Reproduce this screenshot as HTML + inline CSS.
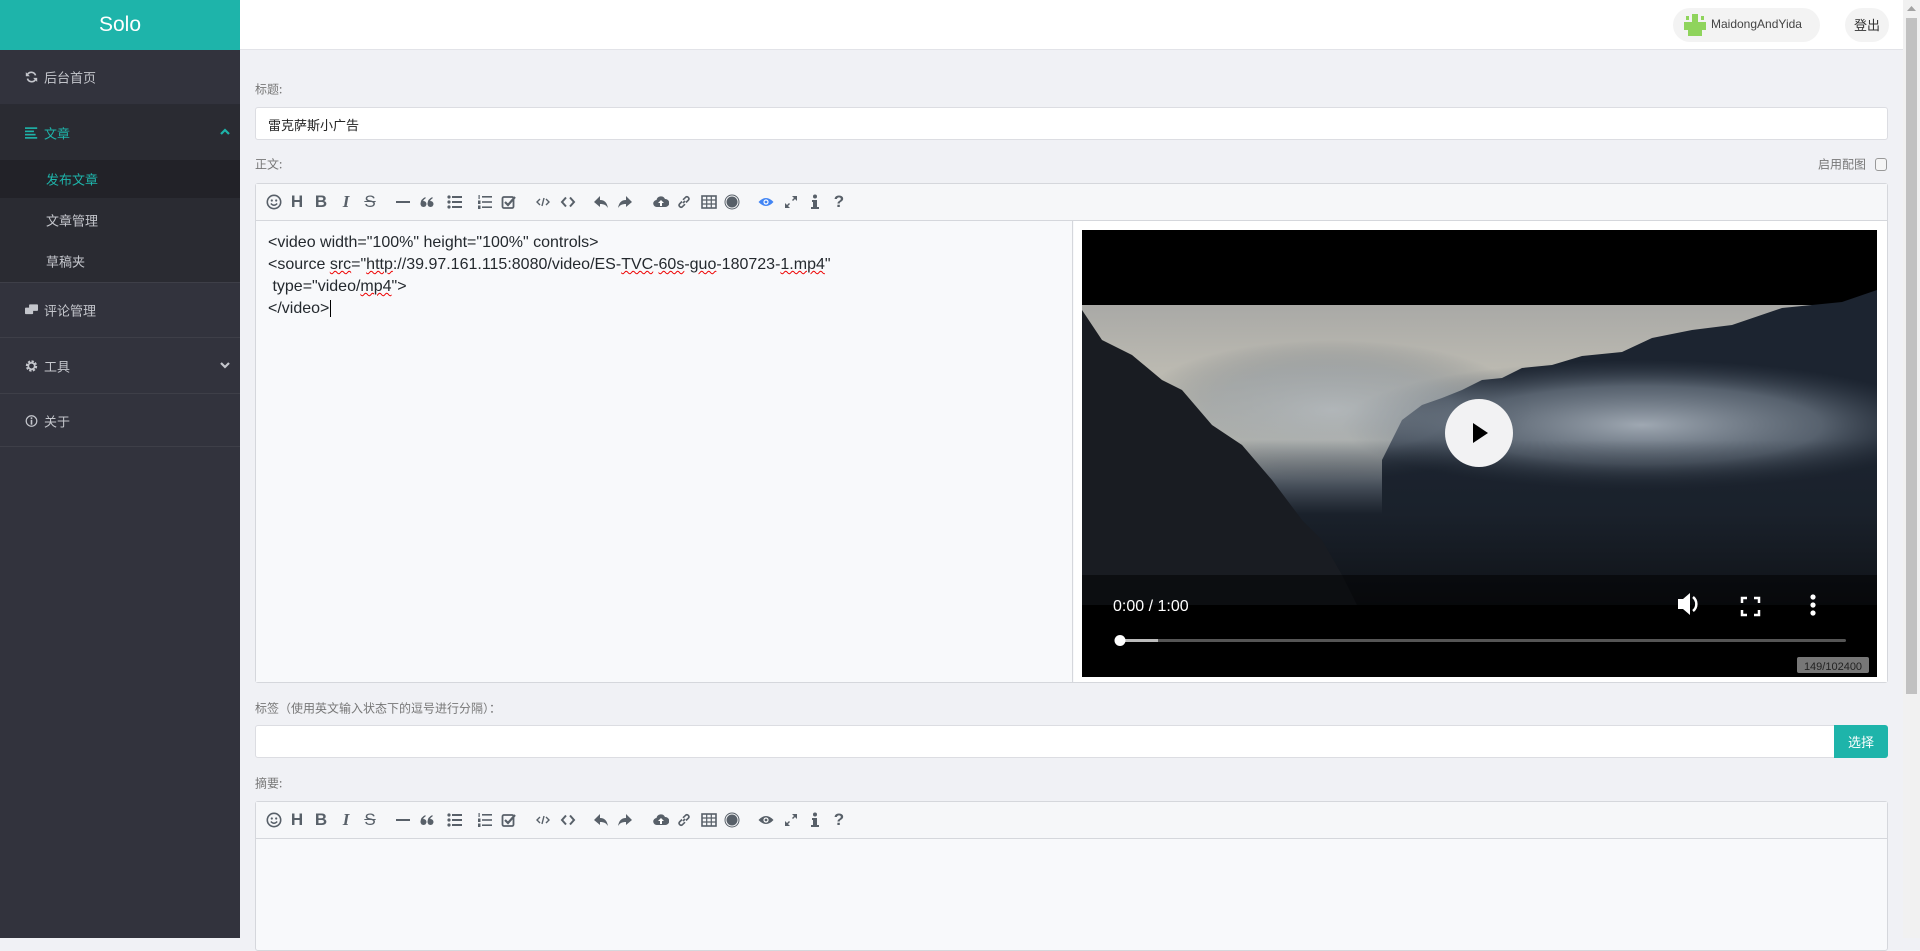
<!DOCTYPE html>
<html><head><meta charset="utf-8">
<style>
*{box-sizing:border-box;margin:0;padding:0}
body{width:1920px;height:938px;overflow:hidden;background:#f0f1f5;font-family:"Liberation Sans","Noto Sans CJK SC",sans-serif;position:relative}
.side{position:absolute;left:0;top:0;width:240px;height:938px;background:#32333d}
.logo{height:50px;background:#1eb4aa;color:#fff;font-size:21px;text-align:center;line-height:50px}
.nav{position:absolute;left:0;width:240px;color:#c4c6cc;font-size:13px;font-family:"Noto Sans CJK SC",sans-serif}
.nav .ic{position:absolute;left:25px;top:50%;transform:translateY(-50%);width:13px;height:13px}
.nav span.t{position:absolute;left:44px;top:50%;transform:translateY(-50%)}
.sub{position:absolute;left:46px;font-size:13px;color:#c4c6cc;font-family:"Noto Sans CJK SC",sans-serif;transform:translateY(-50%)}
.hdr{position:absolute;left:240px;top:0;width:1663px;height:50px;background:#fff;border-bottom:1px solid #e2e3e8}
.sb{position:absolute;right:0;top:0;width:17px;height:938px;background:#f1f1f1}
.sb div{position:absolute;left:3px;top:18px;width:11px;height:676px;background:#c1c1c1}
.lbl{position:absolute;left:255px;font-size:12px;color:#777;font-family:"Noto Sans CJK SC",sans-serif;transform:translateY(-50%)}
.inp{position:absolute;left:255px;background:#fff;border:1px solid #dcdde2;border-radius:3px}
.ed{position:absolute;left:255px;width:1633px;border:1px solid #d5d7dc;border-radius:3px;background:#f8f9fb}
.tb{position:absolute;left:0;top:0;right:0;height:37px;background:#f6f7f9;border-bottom:1px solid #d5d7dc}
.i{position:absolute;top:10px;width:16px;height:16px;margin-left:-8px;color:#586069;fill:#586069;font-weight:bold;font-size:17px;line-height:16px;text-align:center;font-family:"Liberation Sans",sans-serif}
.code{position:absolute;left:12px;top:11px;font-size:16px;line-height:22px;color:#24292e;font-family:"Liberation Sans",sans-serif}
.u{text-decoration:underline wavy #e00;text-decoration-thickness:1px}
</style></head><body>
<div class="side">
 <div class="logo">Solo</div>
 <div class="nav" style="top:50px;height:55px;border-bottom:1px solid #2a2b33">
  <svg class="ic" viewBox="0 0 16 16"><path d="M13 6A5.5 5.5 0 0 0 3 5M3 10a5.5 5.5 0 0 0 10 1" stroke="#c4c6cc" stroke-width="2" fill="none"/><path d="M1 2v5h5zM15 14V9h-5z" fill="#c4c6cc"/></svg><span class="t">后台首页</span></div>
 <div style="position:absolute;top:105px;left:0;width:240px;height:177px;background:#2a2b32"></div>
 <div class="nav" style="top:105px;height:55px;color:#1eb4aa">
  <svg class="ic" viewBox="0 0 16 16" fill="#1eb4aa"><rect x="0" y="1" width="15" height="2"/><rect x="0" y="5" width="11" height="2"/><rect x="0" y="9" width="13" height="2"/><rect x="0" y="13" width="15" height="2"/></svg><span class="t">文章</span>
  <svg style="position:absolute;right:10px;top:23px" width="10" height="7" viewBox="0 0 10 7"><path d="M1 6l4-4 4 4" stroke="#1eb4aa" stroke-width="2.2" fill="none"/></svg></div>
 <div style="position:absolute;top:160px;left:0;width:240px;height:38px;background:#222228"></div>
 <div class="sub" style="top:179px;color:#1eb4aa">发布文章</div>
 <div class="sub" style="top:220px">文章管理</div>
 <div class="sub" style="top:261px">草稿夹</div>
 <div style="position:absolute;top:282px;left:0;width:240px;height:1px;background:#3e3f48"></div>
 <div class="nav" style="top:283px;height:55px;border-bottom:1px solid #3e3f48">
  <svg class="ic" viewBox="0 0 16 16" fill="#c4c6cc"><rect x="5" y="1" width="11" height="8" rx="1"/><rect x="0" y="5" width="10" height="8" rx="1"/></svg><span class="t">评论管理</span></div>
 <div class="nav" style="top:339px;height:55px;border-bottom:1px solid #3e3f48">
  <svg class="ic" viewBox="0 0 16 16"><circle cx="8" cy="8" r="5" stroke="#c4c6cc" stroke-width="4" stroke-dasharray="2.5 1.4" fill="none"/><circle cx="8" cy="8" r="4" stroke="#c4c6cc" stroke-width="2" fill="none"/></svg><span class="t">工具</span>
  <svg style="position:absolute;right:10px;top:23px" width="10" height="7" viewBox="0 0 10 7"><path d="M1 1l4 4 4-4" stroke="#c4c6cc" stroke-width="2.2" fill="none"/></svg></div>
 <div class="nav" style="top:395px;height:52px;border-bottom:1px solid #3e3f48">
  <svg class="ic" viewBox="0 0 16 16"><circle cx="8" cy="8" r="6.5" stroke="#c4c6cc" stroke-width="1.5" fill="none"/><rect x="7" y="6.5" width="2" height="6" fill="#c4c6cc"/><rect x="7" y="3.5" width="2" height="2" fill="#c4c6cc"/></svg><span class="t">关于</span></div>
</div>
<div class="hdr">
 <div style="position:absolute;left:1433px;top:8px;width:147px;height:34px;border-radius:17px;background:#f3f3f3">
  <svg style="position:absolute;left:11px;top:6px" width="22" height="22" viewBox="0 0 22 22" fill="#8fd45c"><rect x="8" y="0" width="6" height="8"/><rect x="0" y="8" width="22" height="8"/><rect x="4" y="16" width="14" height="6"/><rect x="2" y="2" width="3" height="4"/><rect x="17" y="2" width="3" height="4"/></svg>
  <span style="position:absolute;left:38px;top:9px;font-size:12px;color:#444">MaidongAndYida</span></div>
 <div style="position:absolute;left:1605px;top:8px;width:44px;height:34px;border-radius:17px;background:#f3f3f3;font-size:13px;color:#333;text-align:center;line-height:34px;font-family:'Noto Sans CJK SC',sans-serif">登出</div>
</div>
<div class="sb"><div></div><svg style="position:absolute;left:4px;top:5px" width="9" height="6"><path d="M0 6L4.5 1 9 6z" fill="#a3a3a3"/></svg></div>

<div class="lbl" style="top:89px">标题:</div>
<div class="inp" style="top:107px;width:1633px;height:33px"><span style="position:absolute;left:12px;top:7px;font-size:13px;color:#222;font-family:'Noto Sans CJK SC',sans-serif">雷克萨斯小广告</span></div>
<div class="lbl" style="top:164px">正文:</div>
<div class="lbl" style="top:164px;left:1818px">启用配图</div>
<div style="position:absolute;left:1875px;top:158px;width:12px;height:13px;border:1px solid #999;border-radius:3px;background:#f5f5f5"></div>

<div class="ed" style="top:183px;height:500px">
 <div class="tb" id="tb1"></div>
 <div style="position:absolute;left:0;top:37px;width:817px;bottom:0;background:#f8f9fb;border-right:1px solid #d5d7dc">
  <div class="code">&lt;video width="100%" height="100%" controls&gt;<br>&lt;source <span class="u">src</span>="<span class="u">http</span>://39.97.161.115:8080/video/ES-<span class="u">TVC</span>-<span class="u">60s</span>-<span class="u">guo</span>-180723-<span class="u">1.mp4</span>"<br>&nbsp;type="video/<span class="u">mp4</span>"&gt;<br>&lt;/video&gt;<span style="border-left:1px solid #000;margin-left:1px"></span></div>
 </div>
 <div style="position:absolute;left:818px;top:37px;right:0;bottom:0;background:#fff"></div>
</div>

<svg style="position:absolute;left:1082px;top:230px" width="795" height="447" viewBox="0 0 795 447">
 <defs>
  <linearGradient id="sky" x1="0" y1="0" x2="0" y2="1"><stop offset="0" stop-color="#a9a9a6"/><stop offset="0.45" stop-color="#cfcbbd"/><stop offset="0.6" stop-color="#8f9aa6"/><stop offset="1" stop-color="#3a4452"/></linearGradient>
  <radialGradient id="fog" cx="0.5" cy="0.5" r="0.5"><stop offset="0" stop-color="#a6afb9" stop-opacity="0.95"/><stop offset="0.6" stop-color="#7e8a97" stop-opacity="0.6"/><stop offset="1" stop-color="#4a5562" stop-opacity="0"/></radialGradient>
  <linearGradient id="dk" x1="0" y1="0" x2="0" y2="1"><stop offset="0" stop-color="#1a212b" stop-opacity="0"/><stop offset="0.45" stop-color="#1a212b"/><stop offset="1" stop-color="#0f1217"/></linearGradient>
 </defs>
 <rect width="795" height="447" fill="#000"/>
 <rect y="75" width="795" height="300" fill="url(#sky)"/>
 <path d="M300 230L320 190 340 175 360 168 380 160 400 150 420 148 440 138 470 135 500 126 540 122 570 108 610 100 650 95 700 78 760 72 795 60V300H300z" fill="#1c2430"/>
 <ellipse cx="560" cy="195" rx="300" ry="65" fill="url(#fog)"/>
 <ellipse cx="250" cy="180" rx="200" ry="70" fill="url(#fog)" opacity="0.7"/>
 <rect y="210" width="795" height="165" fill="url(#dk)"/>
 <path d="M0 80L20 110 50 125 80 150 100 160 130 195 160 215 190 250 220 290 240 310 260 345 275 375H0z" fill="#191c22"/>
 <rect y="345" width="795" height="30" fill="#000" opacity="0.5"/>
 <rect y="375" width="795" height="72" fill="#000"/>
 <circle cx="397" cy="203" r="34" fill="#f2f2f3"/>
 <path d="M391 193v20l15-10z" fill="#000"/>
 <text x="31" y="381" fill="#fff" font-size="16" font-family="Liberation Sans">0:00 / 1:00</text>
 <path d="M596 369h5l7-6v22l-7-6h-5z" fill="#fff"/><path d="M611 367a9 9 0 0 1 0 14" stroke="#fff" stroke-width="2.5" fill="none"/>
 <path d="M660 373v-5h5M672 368h5v5M677 380v5h-5M665 385h-5v-5" stroke="#fff" stroke-width="2.5" fill="none"/>
 <circle cx="731" cy="367" r="2.6" fill="#fff"/><circle cx="731" cy="375" r="2.6" fill="#fff"/><circle cx="731" cy="383" r="2.6" fill="#fff"/>
 <rect x="36" y="409" width="728" height="3" rx="1.5" fill="#555"/>
 <rect x="36" y="409" width="40" height="3" fill="#bbb"/>
 <circle cx="38" cy="410.5" r="5.5" fill="#fff"/>
 <rect x="715" y="427" width="72" height="16" rx="2" fill="#777"/>
 <text x="751" y="440" fill="#222" font-size="11" text-anchor="middle" font-family="Liberation Sans">149/102400</text>
</svg>

<div class="lbl" style="top:708px">标签（使用英文输入状态下的逗号进行分隔）：</div>
<div class="inp" style="top:725px;width:1580px;height:33px;border-radius:3px 0 0 3px"></div>
<div style="position:absolute;left:1834px;top:725px;width:54px;height:33px;background:#1eb4aa;border-radius:0 3px 3px 0;color:#fff;font-size:13px;text-align:center;line-height:33px;font-family:'Noto Sans CJK SC',sans-serif">选择</div>
<div class="lbl" style="top:783px">摘要:</div>
<div class="ed" style="top:801px;height:150px">
 <div class="tb" id="tb2"></div>
</div>

<template id="icons">
<svg class="i" style="left:18px" viewBox="0 0 16 16"><circle cx="8" cy="8" r="6.7" stroke="#586069" stroke-width="1.6" fill="none"/><circle cx="5.8" cy="6.5" r="1.1"/><circle cx="10.2" cy="6.5" r="1.1"/><path d="M4.8 9.5q3.2 3.5 6.4 0" stroke="#586069" stroke-width="1.4" fill="none"/></svg>
<span class="i" style="left:41px">H</span>
<span class="i" style="left:65px">B</span>
<span class="i" style="left:90px;font-style:italic;font-family:'Liberation Serif',serif">I</span>
<span class="i" style="left:114px;text-decoration:line-through;font-weight:normal">S</span>
<svg class="i" style="left:147px" viewBox="0 0 16 16"><rect x="1" y="7" width="14" height="2"/></svg>
<svg class="i" style="left:171px" viewBox="0 0 16 16"><circle cx="4.5" cy="10" r="3"/><circle cx="11.5" cy="10" r="3"/><path d="M1.5 10q0-5 5-7v1.5q-3 1.5-3 5.5zM8.5 10q0-5 5-7v1.5q-3 1.5-3 5.5z"/></svg>
<svg class="i" style="left:199px" viewBox="0 0 16 16"><circle cx="2" cy="3" r="1.6"/><circle cx="2" cy="8" r="1.6"/><circle cx="2" cy="13" r="1.6"/><rect x="5" y="2" width="10" height="2"/><rect x="5" y="7" width="10" height="2"/><rect x="5" y="12" width="10" height="2"/></svg>
<svg class="i" style="left:229px" viewBox="0 0 16 16"><rect x="1.5" y="1" width="1.2" height="4"/><rect x="1" y="6.5" width="2.5" height="3.5"/><rect x="1" y="11.5" width="2.5" height="3.5"/><rect x="5" y="2" width="10" height="1.6"/><rect x="5" y="7.2" width="10" height="1.6"/><rect x="5" y="12.4" width="10" height="1.6"/></svg>
<svg class="i" style="left:253px" viewBox="0 0 16 16"><rect x="1.5" y="3" width="11" height="11" rx="1.5" stroke="#586069" stroke-width="1.8" fill="none"/><path d="M4 8l3 3 7-8" stroke="#586069" stroke-width="2.2" fill="none"/></svg>
<svg class="i" style="left:287px" viewBox="0 0 16 16"><path d="M5 5L2 8l3 3M11 5l3 3-3 3M9 4l-2 8" stroke="#586069" stroke-width="1.4" fill="none"/></svg>
<svg class="i" style="left:312px" viewBox="0 0 16 16"><path d="M6 3.5L2 8l4 4.5M10 3.5l4 4.5-4 4.5" stroke="#586069" stroke-width="2" fill="none"/></svg>
<svg class="i" style="left:345px" viewBox="0 0 16 16"><path d="M7 2L1 8l6 5V10c4 0 6 1 8 4-1-5-3-8-8-8z"/></svg>
<svg class="i" style="left:369px" viewBox="0 0 16 16"><path d="M9 2l6 6-6 5V10c-4 0-6 1-8 4 1-5 3-8 8-8z"/></svg>
<svg class="i" style="left:405px" viewBox="0 0 16 16"><path d="M4 13a3.5 3.5 0 0 1-.5-7A4.5 4.5 0 0 1 12 5a3.5 3.5 0 0 1 .5 8z"/><path d="M8 6l-3 3h2v3h2V9h2z" fill="#fff"/></svg>
<svg class="i" style="left:428px" viewBox="0 0 16 16"><path d="M7 9l2-2M6 7.5L3.5 10a2 2 0 0 0 2.8 2.8L9 10.2M10 8.5l2.5-2.5a2 2 0 0 0-2.8-2.8L7 5.8" stroke="#586069" stroke-width="1.6" fill="none"/></svg>
<svg class="i" style="left:453px" viewBox="0 0 16 16"><rect x="1" y="2" width="14" height="12" stroke="#586069" stroke-width="1.6" fill="none"/><path d="M1 6h14M1 10h14M5.7 2v12M10.3 2v12" stroke="#586069" stroke-width="1.2"/></svg>
<svg class="i" style="left:476px" viewBox="0 0 16 16"><circle cx="8" cy="8" r="7" stroke="#586069" stroke-width="1" fill="none"/><circle cx="8" cy="8" r="5.5"/></svg>
<svg class="i" id="eye" style="left:510px" viewBox="0 0 16 16"><path d="M0.5 8Q8 0 15.5 8 8 16 0.5 8z"/><circle cx="8" cy="8" r="2.6" fill="#fff"/><circle cx="8" cy="8" r="1.4"/></svg>
<svg class="i" style="left:535px" viewBox="0 0 16 16"><path d="M9 2h5v5l-2-2-2 2-1-1 2-2zM7 14H2V9l2 2 2-2 1 1-2 2z"/></svg>
<svg class="i" style="left:559px" viewBox="0 0 16 16"><circle cx="8" cy="2.5" r="2"/><path d="M5 6h5v7h2v2H4v-2h2V8H5z"/></svg>
<span class="i" style="left:583px">?</span>
</template>
<script>
var t=document.getElementById('icons').innerHTML;
document.getElementById('tb1').innerHTML=t;
document.getElementById('tb2').innerHTML=t;
var e=document.querySelector('#tb1 #eye');e.style.fill='#4285f4';
</script>
</body></html>
